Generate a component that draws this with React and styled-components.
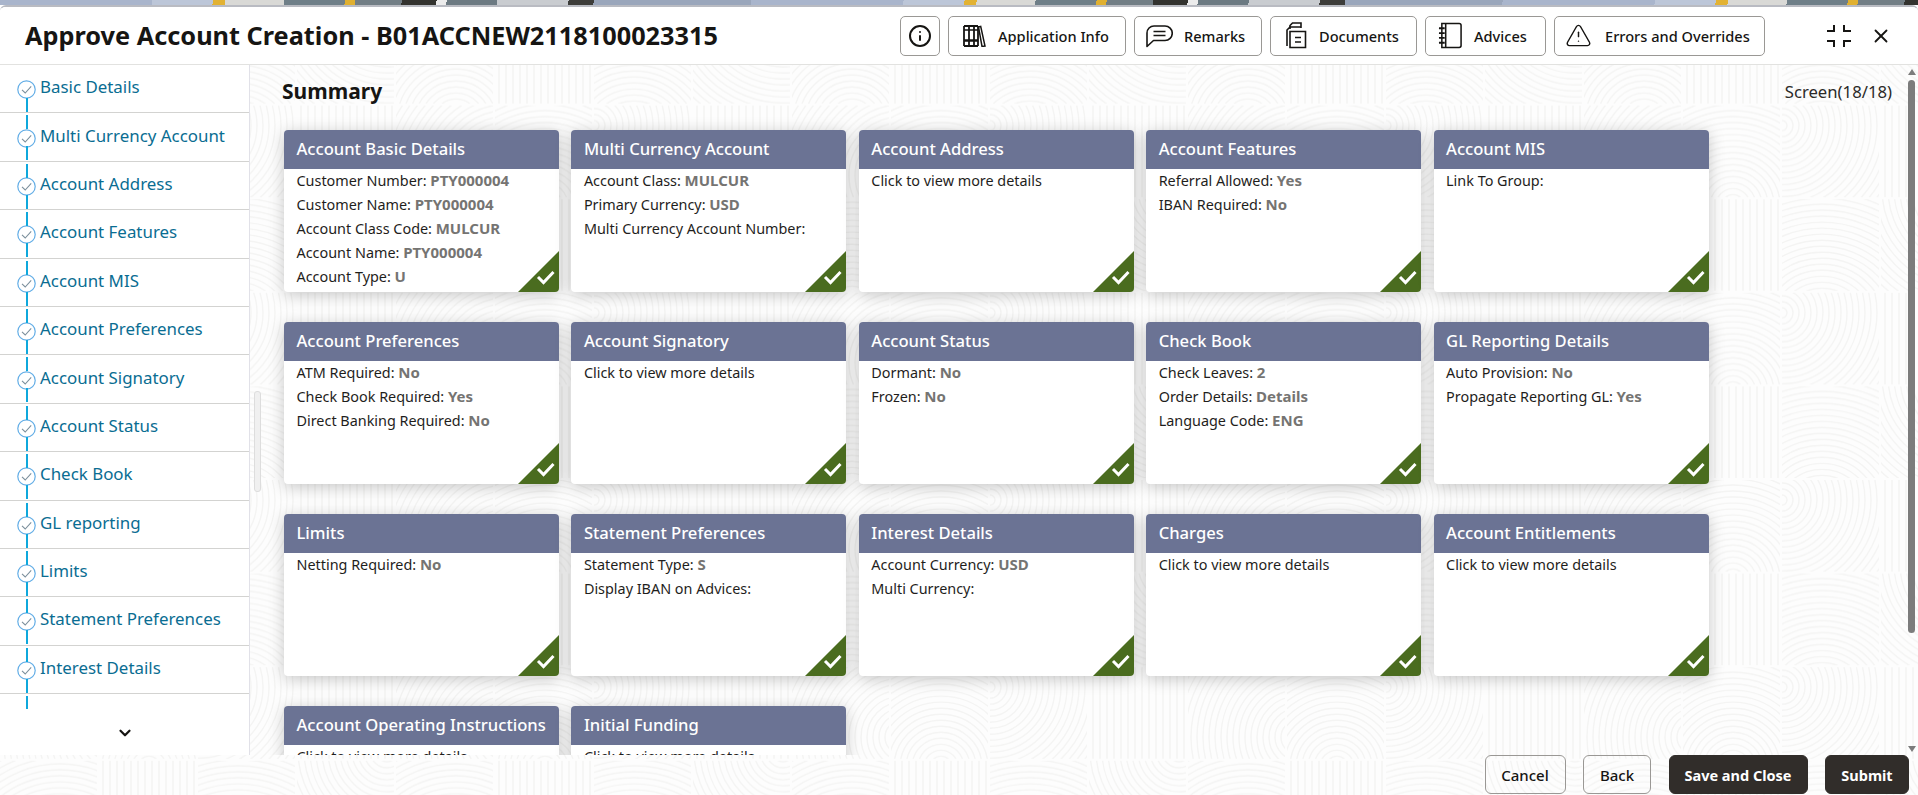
import React from "react";
import styled, { createGlobalStyle } from "styled-components";
import { ChevronDown, Info, TriangleAlert, X } from "lucide-react";

const GlobalStyle = createGlobalStyle`
  html, body {
    margin: 0;
    height: 100%;
    overflow: hidden;
    background: #fff;
    font-family: "Noto Sans", "Open Sans", sans-serif;
    color: #161513;
  }
`;

const Page = styled.div`
  height: 795px;
  display: flex;
  flex-direction: column;
`;

const PhotoStrip = styled.div`
  height: 5px;
  flex: none;
  background: repeating-linear-gradient(
    100deg,
    #a9b5cc 0 150px,
    #bcc6d8 150px 210px,
    #e2b233 210px 222px,
    #d9d9d6 222px 280px,
    #6f7f88 280px 340px,
    #e0b030 340px 350px,
    #727e85 350px 396px,
    #33332f 396px 430px,
    #ececec 430px 440px,
    #6c7a82 440px 490px,
    #c9ccd0 490px 560px,
    #3d3d3a 560px 585px,
    #9aa6bb 585px 740px
  );
`;

const Window = styled.div`
  position: relative;
  flex: 1;
  min-height: 0;
  display: flex;
  flex-direction: column;
  background: #fdfdfd;
  border-top: 2px solid #b9bbc2;
  border-radius: 6px 6px 0 0;
  overflow: hidden;
`;

const Backdrop = styled.svg`
  position: absolute;
  inset: 0;
  width: 100%;
  height: 100%;
  pointer-events: none;
`;

const Header = styled.header`
  position: relative;
  flex: none;
  height: 58px;
  box-sizing: border-box;
  display: flex;
  align-items: center;
  padding: 0 26px 0 25px;
  background: #fff;
  border-bottom: 1px solid #e2e2e0;
`;

const Title = styled.h1`
  flex: 1;
  margin: 0;
  font-size: 25.3px;
  font-weight: 700;
  line-height: 1;
`;

const Toolbar = styled.div`
  display: flex;
  align-items: center;
  gap: 8px;
`;

const ToolButton = styled.button`
  height: 40px;
  width: ${(p) => p.$width}px;
  box-sizing: border-box;
  display: flex;
  align-items: center;
  justify-content: ${(p) => (p.$iconOnly ? "center" : "flex-start")};
  gap: ${(p) => p.$gap ?? 12}px;
  padding: ${(p) => (p.$iconOnly ? "0" : `0 0 0 ${p.$pad ?? 14}px`)};
  background: #fff;
  border: 1px solid #9a9895;
  border-radius: 5px;
  font-family: inherit;
  font-size: 14.6px;
  font-weight: 500;
  color: #161513;
`;

const WindowControls = styled.div`
  display: flex;
  align-items: center;
  gap: 19px;
  margin-left: 62px;
`;

const Body = styled.div`
  position: relative;
  flex: 1;
  min-height: 0;
  display: flex;
`;

const Sidebar = styled.nav`
  flex: none;
  width: 250px;
  box-sizing: border-box;
  display: flex;
  flex-direction: column;
  background: #fff;
  border-right: 1px solid #e1e1e8;
`;

const StepList = styled.div`
  flex: 1;
  min-height: 0;
  overflow: hidden;
`;

const Step = styled.div`
  position: relative;
  height: 48.4px;
  box-sizing: border-box;
  display: flex;
  align-items: center;
  gap: 4px;
  padding-left: 17px;
  border-bottom: 1px solid #d3d3d1;

  &::before,
  &::after {
    content: "";
    position: absolute;
    left: 26px;
    width: 2px;
    height: 14px;
    background: #0fa8dc;
  }
  &::before {
    top: 2px;
    display: ${(p) => (p.$first ? "none" : "block")};
  }
  &::after {
    top: 33px;
  }
`;

const StepLabel = styled.span`
  margin-bottom: 4px;
  font-size: 16.9px;
  color: #0a6d92;
`;

const StepMark = styled.svg`
  flex: none;
  width: 19px;
  height: 19px;
  margin-top: 2px;
`;

const SideFooter = styled.div`
  flex: none;
  height: 46px;
  box-sizing: border-box;
  padding-top: 2px;
  display: flex;
  align-items: center;
  justify-content: center;
  background: #fff;
`;

const SideHandle = styled.div`
  position: absolute;
  left: 254px;
  top: 326px;
  width: 7px;
  height: 101px;
  box-sizing: border-box;
  background: #f0f0f0;
  border: 1px solid #dddddd;
  border-radius: 3px;
`;

const Main = styled.main`
  position: relative;
  flex: 1;
  min-width: 0;
  overflow: hidden;
  padding: 11px 26px 0 32px;
`;

const SummaryRow = styled.div`
  height: 30px;
  display: flex;
  align-items: center;
  justify-content: space-between;
  margin-bottom: 24px;
`;

const SummaryTitle = styled.h2`
  margin: 0;
  font-size: 21px;
  font-weight: 700;
`;

const ScreenCount = styled.span`
  font-size: 16.7px;
  color: #2b2a28;
`;

const CardGrid = styled.div`
  display: grid;
  grid-template-columns: repeat(5, 275px);
  column-gap: 12.4px;
  row-gap: 30px;
  padding-left: 2px;
`;

const Card = styled.section`
  position: relative;
  height: 162px;
  background: #fff;
  border-radius: 4px;
  box-shadow: 0 3px 16px rgba(0, 0, 0, 0.22);
  overflow: hidden;
`;

const CardHeader = styled.h3`
  height: 39px;
  box-sizing: border-box;
  margin: 0;
  padding: 0 0 2px 12.5px;
  display: flex;
  align-items: center;
  background: #6b7394;
  color: #fff;
  font-size: 16.6px;
  font-weight: 500;
`;

const CardBody = styled.div`
  padding: 0 12.5px;
`;

const Field = styled.div`
  height: 24px;
  line-height: 24px;
  font-size: 14.4px;
  color: #1f1e1c;
  white-space: nowrap;
`;

const FieldValue = styled.b`
  font-size: 15px;
  line-height: 1;
  font-weight: 700;
  color: #757472;
`;

const DoneCorner = styled.svg`
  position: absolute;
  right: 0;
  bottom: 0;
  width: 41px;
  height: 41px;
`;

const FakeScrollbar = styled.div`
  position: absolute;
  right: 3px;
  top: 0;
  bottom: 0;
  width: 7px;
`;

const ScrollThumb = styled.div`
  position: absolute;
  top: 15px;
  left: 0;
  width: 7px;
  height: 553px;
  background: #7c7c7c;
  border-radius: 4px;
`;

const ScrollArrow = styled.div`
  position: absolute;
  left: 0;
  ${(p) => (p.$down ? "bottom: 3px" : "top: 4px")};
  border-left: 4px solid transparent;
  border-right: 4px solid transparent;
  ${(p) => (p.$down ? "border-top: 6px solid #7c7c7c" : "border-bottom: 6px solid #7c7c7c")};
`;

const Footer = styled.footer`
  position: relative;
  flex: none;
  height: 40px;
  display: flex;
  justify-content: flex-end;
  gap: 17.5px;
  padding-right: 9px;
`;

const FooterButton = styled.button`
  width: ${(p) => p.$width}px;
  height: 39px;
  background: ${(p) => (p.$dark ? "#312d2a" : "transparent")};
  border: 1px solid ${(p) => (p.$dark ? "#312d2a" : "#9a9895")};
  border-radius: 6px;
  color: ${(p) => (p.$dark ? "#fff" : "#161513")};
  font-family: inherit;
  font-size: ${(p) => (p.$dark ? 14.5 : 15)}px;
  font-weight: ${(p) => (p.$dark ? 700 : 500)};
`;

const BookshelfIcon = () => (
  <svg width="23" height="22" viewBox="0 0 23 22" fill="none" stroke="#161513" strokeWidth="1.8">
    <path d="M1 1v20M6 1v20M11 1v20M15 1v20M1 1h14M1 21h14" />
    <path d="M15.5 2l2.2-.6L22 21l-3 .4z" strokeWidth="1.5" />
    <path d="M1 15.5h14" strokeWidth="2.6" />
    <path d="M1 5h14" strokeWidth="1.4" />
  </svg>
);

const RemarksIcon = () => (
  <svg width="27" height="24" viewBox="0 0 27 24" fill="none" stroke="#161513" strokeWidth="1.6">
    <path d="M1 22.5V9a7 7 0 0 1 7-7h11a7 7 0 0 1 0 14.5H7.5z" strokeLinejoin="round" />
    <path d="M7.5 7.5h12M7.5 11.5h12" />
  </svg>
);

const DocumentsIcon = () => (
  <svg width="22" height="27" viewBox="0 0 22 27" fill="none" stroke="#161513" strokeWidth="1.6">
    <path d="M5 7V3.5L7.5 1H16v5" />
    <path d="M2 24V8l3-3h11" />
    <path d="M5 9.5h15.5v16H5z" />
    <path d="M10 15.5h6M10 20h6" />
  </svg>
);

const AdvicesIcon = () => (
  <svg width="25" height="27" viewBox="0 0 26 27" fill="none" stroke="#161513" strokeWidth="1.6">
    <path d="M4 1h18a2 2 0 0 1 2 2v21a2 2 0 0 1-2 2H4z" />
    <path d="M8 1v25" />
    <path d="M1 6h6M1 11h6M1 16h6M1 21h6" strokeWidth="2" />
  </svg>
);

const ExpandIcon = () => (
  <svg width="24" height="24" viewBox="0 0 24 24" fill="none" stroke="#161513" strokeWidth="2">
    <path d="M0 7h7V1M17 1v6h7M0 17h7v6M24 17h-7v6" />
  </svg>
);

const StepCheck = () => (
  <StepMark viewBox="0 0 19 19" fill="none">
    <circle cx="9.5" cy="9.5" r="8.7" stroke="#62ade6" strokeWidth="1.2" />
    <path d="M5 9.8l3.2 3.2 6-6.6" stroke="#7b8f9c" strokeWidth="1.1" />
  </StepMark>
);

const Corner = () => (
  <DoneCorner viewBox="0 0 41 41">
    <path d="M41 0v41H0z" fill="#4a6c1f" />
    <path d="M20 26l5.5 5.5L35.5 21" fill="none" stroke="#fff" strokeWidth="3" />
  </DoneCorner>
);

// fingerprint style tile behind the content, one clip per patch
const CELL_W = 99;
const CELL_H = 93.6;
const patches = [
  { c: 0, r: 0, x: 60, y: 110 },
  { c: 1, r: 0, lines: true },
  { c: 2, r: 0, x: 40, y: 130 },
  { c: 3, r: 0, x: 90, y: -10 },
  { c: 0, r: 1, x: 110, y: 70 },
  { c: 1, r: 1, x: 50, y: 100 },
  { c: 2, r: 1, x: 0, y: 20 },
  { c: 3, r: 1, lines: true },
];
const radii = Array.from({ length: 26 }, (_, i) => 5 + i * 6);
const lineXs = Array.from({ length: 15 }, (_, i) => 4 + i * 7);

const Fingerprints = () => (
  <Backdrop>
    <defs>
      <pattern id="fp" width={CELL_W * 4} height={CELL_H * 2} patternUnits="userSpaceOnUse" y="5">
        {patches.map((p, i) => (
          <svg key={i} x={p.c * CELL_W} y={p.r * CELL_H} width={CELL_W - 2} height={CELL_H - 2}>
            <g fill="none" stroke="#f4f4f3" strokeWidth="1.4">
              {p.lines
                ? lineXs.map((x) => <path key={x} d={`M${x} 0V${CELL_H}`} />)
                : radii.map((r) => <circle key={r} cx={p.x} cy={p.y} r={r} />)}
            </g>
          </svg>
        ))}
      </pattern>
    </defs>
    <rect width="100%" height="100%" fill="url(#fp)" />
  </Backdrop>
);

const steps = [
  "Basic Details",
  "Multi Currency Account",
  "Account Address",
  "Account Features",
  "Account MIS",
  "Account Preferences",
  "Account Signatory",
  "Account Status",
  "Check Book",
  "GL reporting",
  "Limits",
  "Statement Preferences",
  "Interest Details",
  "Charges",
];

const more = [["Click to view more details"]];

const cards = [
  ["Account Basic Details", [["Customer Number: ", "PTY000004"], ["Customer Name: ", "PTY000004"], ["Account Class Code: ", "MULCUR"], ["Account Name: ", "PTY000004"], ["Account Type: ", "U"]]],
  ["Multi Currency Account", [["Account Class: ", "MULCUR"], ["Primary Currency: ", "USD"], ["Multi Currency Account Number:"]]],
  ["Account Address", more],
  ["Account Features", [["Referral Allowed: ", "Yes"], ["IBAN Required: ", "No"]]],
  ["Account MIS", [["Link To Group:"]]],
  ["Account Preferences", [["ATM Required: ", "No"], ["Check Book Required: ", "Yes"], ["Direct Banking Required: ", "No"]]],
  ["Account Signatory", more],
  ["Account Status", [["Dormant: ", "No"], ["Frozen: ", "No"]]],
  ["Check Book", [["Check Leaves: ", "2"], ["Order Details: ", "Details"], ["Language Code: ", "ENG"]]],
  ["GL Reporting Details", [["Auto Provision: ", "No"], ["Propagate Reporting GL: ", "Yes"]]],
  ["Limits", [["Netting Required: ", "No"]]],
  ["Statement Preferences", [["Statement Type: ", "S"], ["Display IBAN on Advices:"]]],
  ["Interest Details", [["Account Currency: ", "USD"], ["Multi Currency:"]]],
  ["Charges", more],
  ["Account Entitlements", more],
  ["Account Operating Instructions", more],
  ["Initial Funding", more],
];

export default function App() {
  return (
    <Page>
      <GlobalStyle />
      <PhotoStrip />
      <Window>
        <Fingerprints />
        <Header>
          <Title>Approve Account Creation - B01ACCNEW2118100023315</Title>
          <Toolbar>
            <ToolButton $iconOnly $width={40}>
              <Info size={24} color="#161513" strokeWidth={2} />
            </ToolButton>
            <ToolButton $width={178}>
              <BookshelfIcon />
              Application Info
            </ToolButton>
            <ToolButton $width={128} $pad={11} $gap={11}>
              <RemarksIcon />
              Remarks
            </ToolButton>
            <ToolButton $width={147}>
              <DocumentsIcon />
              Documents
            </ToolButton>
            <ToolButton $width={121} $pad={12} $gap={11}>
              <AdvicesIcon />
              Advices
            </ToolButton>
            <ToolButton $width={211} $pad={10} $gap={13}>
              <TriangleAlert size={27} color="#161513" strokeWidth={1.3} />
              Errors and Overrides
            </ToolButton>
          </Toolbar>
          <WindowControls>
            <ExpandIcon />
            <X size={22} color="#161513" strokeWidth={2} />
          </WindowControls>
        </Header>
        <Body>
          <Sidebar>
            <StepList>
              {steps.map((step, i) => (
                <Step key={step} $first={i === 0}>
                  <StepCheck />
                  <StepLabel>{step}</StepLabel>
                </Step>
              ))}
            </StepList>
            <SideFooter>
              <ChevronDown size={18} color="#161513" strokeWidth={3} />
            </SideFooter>
          </Sidebar>
          <SideHandle />
          <Main>
            <SummaryRow>
              <SummaryTitle>Summary</SummaryTitle>
              <ScreenCount>Screen(18/18)</ScreenCount>
            </SummaryRow>
            <CardGrid>
              {cards.map(([title, fields], i) => (
                <Card key={title}>
                  <CardHeader>{title}</CardHeader>
                  <CardBody>
                    {fields.map(([label, value]) => (
                      <Field key={label}>
                        {label}
                        {value && <FieldValue>{value}</FieldValue>}
                      </Field>
                    ))}
                  </CardBody>
                  {i < 15 && <Corner />}
                </Card>
              ))}
            </CardGrid>
            <FakeScrollbar>
              <ScrollArrow />
              <ScrollThumb />
              <ScrollArrow $down />
            </FakeScrollbar>
          </Main>
        </Body>
        <Footer>
          <FooterButton $width={81}>Cancel</FooterButton>
          <FooterButton $width={68}>Back</FooterButton>
          <FooterButton $dark $width={139}>Save and Close</FooterButton>
          <FooterButton $dark $width={84}>Submit</FooterButton>
        </Footer>
      </Window>
    </Page>
  );
}
